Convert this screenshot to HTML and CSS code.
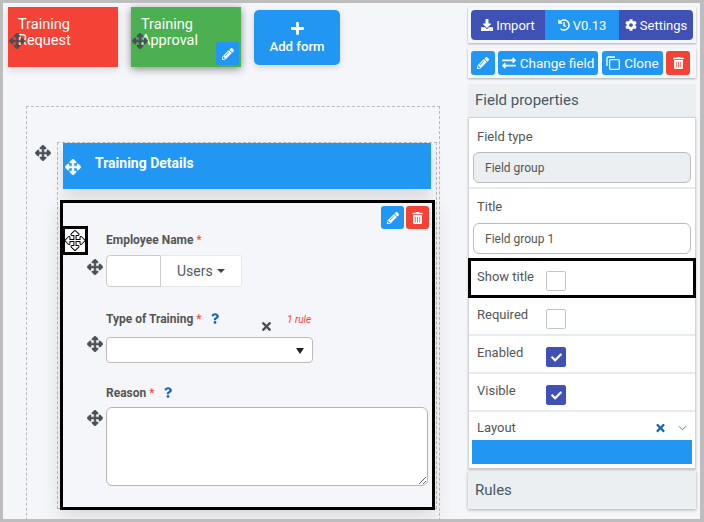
FILE: index.html
```html
<!DOCTYPE html>
<html lang="en">
<head>
    <meta charset="UTF-8">
    <meta name="viewport" content="width=device-width, initial-scale=1.0">
    <title>Form Builder</title>
    <link rel="stylesheet" href="styles.css">
</head>
<body>
    <svg class="sprite" xmlns="http://www.w3.org/2000/svg">
        <symbol id="i-move" viewBox="0 0 512 512"><path d="M352.201 425.775l-79.196 79.196c-9.373 9.373-24.568 9.373-33.941 0l-79.196-79.196c-15.119-15.119-4.411-40.971 16.971-40.97h51.162L228 284H127.196v51.162c0 21.382-25.851 32.09-40.971 16.971L7.029 272.937c-9.373-9.373-9.373-24.569 0-33.941L86.225 159.8c15.119-15.119 40.971-4.411 40.971 16.971V228H228V127.196h-51.23c-21.382 0-32.09-25.851-16.971-40.971l79.196-79.196c9.373-9.373 24.568-9.373 33.941 0l79.196 79.196c15.119 15.119 4.411 40.971-16.971 40.971h-51.162V228h100.804v-51.162c0-21.382 25.851-32.09 40.97-16.971l79.196 79.196c9.373 9.373 9.373 24.569 0 33.941L425.773 352.2c-15.119 15.119-40.971 4.411-40.97-16.971V284H284v100.804h51.23c21.382 0 32.09 25.851 16.971 40.971z"/></symbol>
        <symbol id="i-pencil" viewBox="0 0 512 512"><path d="M497.9 142.1l-46.1 46.1c-4.7 4.7-12.3 4.7-17 0l-111-111c-4.7-4.7-4.7-12.3 0-17l46.1-46.1c18.7-18.7 49.1-18.7 67.9 0l60.1 60.1c18.8 18.7 18.8 49.1 0 67.9zM284.2 99.8L21.6 362.4.4 483.9c-2.9 16.4 11.4 30.6 27.8 27.8l121.5-21.3 262.6-262.6c4.7-4.7 4.7-12.3 0-17l-111-111c-4.8-4.7-12.4-4.7-17.1 0zM124.1 339.9c-5.5-5.5-5.5-14.3 0-19.8l154-154c5.5-5.5 14.3-5.5 19.8 0s5.5 14.3 0 19.8l-154 154c-5.5 5.5-14.3 5.5-19.8 0zM88 424h48v36.3l-64.5 11.3-31.1-31.1L51.7 376H88v48z"/></symbol>
        <symbol id="i-trash" viewBox="0 0 448 512"><path d="M32 464a48 48 0 0 0 48 48h288a48 48 0 0 0 48-48V128H32zm272-256a16 16 0 0 1 32 0v224a16 16 0 0 1-32 0zm-96 0a16 16 0 0 1 32 0v224a16 16 0 0 1-32 0zm-96 0a16 16 0 0 1 32 0v224a16 16 0 0 1-32 0zM432 32H312l-9.4-18.7A24 24 0 0 0 281.1 0H166.8a23.72 23.72 0 0 0-21.4 13.3L136 32H16A16 16 0 0 0 0 48v32a16 16 0 0 0 16 16h416a16 16 0 0 0 16-16V48a16 16 0 0 0-16-16z"/></symbol>
        <symbol id="i-plus" viewBox="0 0 448 512"><path d="M416 208H272V64c0-17.67-14.33-32-32-32h-32c-17.67 0-32 14.33-32 32v144H32c-17.67 0-32 14.33-32 32v32c0 17.67 14.33 32 32 32h144v144c0 17.67 14.33 32 32 32h32c17.67 0 32-14.33 32-32V304h144c17.67 0 32-14.33 32-32v-32c0-17.67-14.33-32-32-32z"/></symbol>
        <symbol id="i-times" viewBox="0 0 352 512"><path d="M242.72 256l100.07-100.07c12.28-12.28 12.28-32.19 0-44.48l-22.24-22.24c-12.28-12.28-32.19-12.28-44.48 0L176 189.28 75.93 89.21c-12.28-12.28-32.19-12.28-44.48 0L9.21 111.45c-12.28 12.28-12.28 32.19 0 44.48L109.28 256 9.21 356.07c-12.28 12.28-12.28 32.19 0 44.48l22.24 22.24c12.28 12.28 32.2 12.28 44.48 0L176 322.72l100.07 100.07c12.28 12.28 32.2 12.28 44.48 0l22.24-22.24c12.28-12.28 12.28-32.19 0-44.48L242.72 256z"/></symbol>
        <symbol id="i-check" viewBox="0 0 512 512"><path d="M173.898 439.404l-166.4-166.4c-9.997-9.997-9.997-26.206 0-36.204l36.203-36.204c9.997-9.998 26.207-9.998 36.204 0L192 312.69 432.095 72.596c9.997-9.997 26.207-9.997 36.204 0l36.203 36.204c9.997 9.997 9.997 26.206 0 36.204l-294.4 294.401c-9.998 9.997-26.207 9.997-36.204-.001z"/></symbol>
        <symbol id="i-question" viewBox="0 0 384 512"><path d="M202.021 0C122.202 0 70.503 32.703 29.914 91.026c-7.363 10.58-5.093 25.086 5.178 32.874l43.138 32.709c10.373 7.865 25.132 6.026 33.253-4.148 25.049-31.381 43.63-49.449 82.757-49.449 30.764 0 68.816 19.799 68.816 49.631 0 22.552-18.617 34.134-48.993 51.164-35.423 19.86-82.299 44.576-82.299 106.405V320c0 13.255 10.745 24 24 24h72.471c13.255 0 24-10.745 24-24v-5.773c0-42.86 125.268-44.645 125.268-160.627C377.504 66.256 286.902 0 202.021 0zM192 373.459c-38.196 0-69.271 31.075-69.271 69.271 0 38.195 31.075 69.27 69.271 69.27s69.271-31.075 69.271-69.271-31.075-69.27-69.271-69.27z"/></symbol>
        <symbol id="i-download" viewBox="0 0 512 512"><path d="M216 0h80c13.3 0 24 10.7 24 24v168h87.7c17.8 0 26.7 21.5 14.1 34.1L269.7 378.3c-7.5 7.5-19.8 7.5-27.3 0L90.1 226.1c-12.6-12.6-3.7-34.1 14.1-34.1H192V24c0-13.3 10.7-24 24-24zm296 376v112c0 13.3-10.7 24-24 24H24c-13.3 0-24-10.7-24-24V376c0-13.3 10.7-24 24-24h146.7l49 49c20.1 20.1 52.5 20.1 72.6 0l49-49H488c13.3 0 24 10.7 24 24zm-124 88c0-11-9-20-20-20s-20 9-20 20 9 20 20 20 20-9 20-20zm64 0c0-11-9-20-20-20s-20 9-20 20 9 20 20 20 20-9 20-20z"/></symbol>
        <symbol id="i-history" viewBox="0 0 512 512"><path d="M504 255.531c.253 136.64-111.18 248.372-247.82 248.468-59.015.042-113.223-20.53-155.822-54.911-11.077-8.94-11.905-25.541-1.839-35.607l11.267-11.267c8.609-8.609 22.353-9.551 31.891-1.984C173.062 425.135 212.781 440 256 440c101.705 0 184-82.311 184-184 0-101.705-82.311-184-184-184-48.814 0-93.149 18.969-126.068 49.932l50.754 50.754c10.08 10.08 2.941 27.314-11.313 27.314H24c-8.837 0-16-7.163-16-16V38.627c0-14.254 17.234-21.393 27.314-11.314l49.372 49.372C129.209 34.136 189.552 8 256 8c136.81 0 247.747 110.78 248 247.531zm-180.912 78.784l9.823-12.63c8.138-10.463 6.253-25.542-4.21-33.679L288 256.349V152c0-13.255-10.745-24-24-24h-16c-13.255 0-24 10.745-24 24v135.651l65.409 50.874c10.463 8.137 25.541 6.253 33.679-4.21z"/></symbol>
        <symbol id="i-cog" viewBox="0 0 512 512"><path d="M487.4 315.7l-42.6-24.6c4.3-23.2 4.3-47 0-70.2l42.6-24.6c4.9-2.8 7.1-8.6 5.5-14-11.1-35.6-30-67.8-54.7-94.6-3.8-4.1-10-5.1-14.8-2.3L380.8 110c-17.9-15.4-38.5-27.3-60.8-35.1V25.8c0-5.6-3.9-10.5-9.4-11.7-36.7-8.2-74.3-7.8-109.2 0-5.5 1.2-9.4 6.1-9.4 11.7V75c-22.2 7.9-42.8 19.8-60.8 35.1L88.7 85.5c-4.9-2.8-11-1.9-14.8 2.3-24.7 26.7-43.6 58.9-54.7 94.6-1.7 5.4.6 11.2 5.5 14L67.3 221c-4.3 23.2-4.3 47 0 70.2l-42.6 24.6c-4.9 2.8-7.1 8.6-5.5 14 11.1 35.6 30 67.8 54.7 94.6 3.8 4.1 10 5.1 14.8 2.3l42.6-24.6c17.9 15.4 38.5 27.3 60.8 35.1v49.2c0 5.6 3.9 10.5 9.4 11.7 36.7 8.2 74.3 7.8 109.2 0 5.5-1.2 9.4-6.1 9.4-11.7v-49.2c22.2-7.9 42.8-19.8 60.8-35.1l42.6 24.6c4.9 2.8 11 1.9 14.8-2.3 24.7-26.7 43.6-58.9 54.7-94.6 1.5-5.5-.7-11.3-5.6-14.1zM256 336c-44.1 0-80-35.9-80-80s35.9-80 80-80 80 35.9 80 80-35.9 80-80 80z"/></symbol>
        <symbol id="i-exchange" viewBox="0 0 512 512"><path d="M0 168v-16c0-13.255 10.745-24 24-24h360V80c0-21.367 25.899-32.042 40.971-16.971l80 80c9.372 9.373 9.372 24.569 0 33.941l-80 80C409.956 271.982 384 261.456 384 240v-48H24c-13.255 0-24-10.745-24-24zm488 152H128v-48c0-21.314-25.862-32.08-40.971-16.971l-80 80c-9.372 9.373-9.372 24.569 0 33.941l80 80C102.057 464.028 128 453.542 128 432v-48h360c13.255 0 24-10.745 24-24v-16c0-13.255-10.745-24-24-24z"/></symbol>
        <symbol id="i-clone" viewBox="0 0 14 14"><path d="M1 10V2a1 1 0 0 1 1-1h7" fill="none" stroke="currentColor" stroke-width="1.3"/><rect x="3.6" y="3.6" width="9.7" height="9.7" rx="1" fill="none" stroke="currentColor" stroke-width="1.3"/></symbol>
        <symbol id="i-chevron" viewBox="0 0 10 6"><path d="M1 1l4 4 4-4" fill="none" stroke="currentColor" stroke-width="1"/></symbol>
    </svg>

    <div class="frame">
        <main class="builder">
            <div class="forms">
                <div class="tab tab-red">
                    Training Request
                    <svg class="move move-tab"><use href="#i-move"/></svg>
                </div>
                <div class="tab tab-green">
                    Training Approval
                    <svg class="move move-tab"><use href="#i-move"/></svg>
                    <span class="btn btn-blue tab-edit"><svg class="icon"><use href="#i-pencil"/></svg></span>
                </div>
                <div class="add-form">
                    <svg class="add-icon"><use href="#i-plus"/></svg>
                    Add form
                </div>
            </div>

            <div class="canvas">
                <div class="group">
                    <svg class="move move-group"><use href="#i-move"/></svg>
                    <div class="group-title">
                        <svg class="move move-title"><use href="#i-move"/></svg>
                        Training Details
                    </div>

                    <section class="selected">
                        <span class="cursor"><svg><use href="#i-move"/></svg></span>
                        <div class="selected-tools">
                            <span class="btn btn-blue"><svg class="icon"><use href="#i-pencil"/></svg></span>
                            <span class="btn btn-red"><svg class="icon icon-trash"><use href="#i-trash"/></svg></span>
                        </div>

                        <div class="field field-name">
                            <label class="field-label">Employee Name <span class="req">*</span></label>
                            <div class="control">
                                <svg class="move move-name"><use href="#i-move"/></svg>
                                <input class="name-input" type="text">
                                <span class="users">Users<i class="caret"></i></span>
                            </div>
                        </div>

                        <div class="field field-type">
                            <label class="field-label">Type of Training <span class="req">*</span><svg class="help"><use href="#i-question"/></svg></label>
                            <div class="control">
                                <svg class="move move-type"><use href="#i-move"/></svg>
                                <svg class="rule-x"><use href="#i-times"/></svg>
                                <span class="rule-count">1 rule</span>
                                <div class="select"><i class="select-arrow"></i></div>
                            </div>
                        </div>

                        <div class="field field-reason">
                            <label class="field-label">Reason <span class="req">*</span><svg class="help"><use href="#i-question"/></svg></label>
                            <div class="control">
                                <svg class="move move-reason"><use href="#i-move"/></svg>
                                <textarea class="reason"></textarea>
                            </div>
                        </div>
                    </section>
                </div>
            </div>
        </main>

        <aside class="side">
            <div class="toolbar">
                <div class="btn-group">
                    <span class="seg seg-indigo"><svg class="icon"><use href="#i-download"/></svg>Import</span>
                    <span class="seg seg-blue"><svg class="icon"><use href="#i-history"/></svg>V0.13</span>
                    <span class="seg seg-indigo"><svg class="icon"><use href="#i-cog"/></svg>Settings</span>
                </div>
            </div>
            <div class="toolbar toolbar-field">
                <span class="btn btn-blue"><svg class="icon"><use href="#i-pencil"/></svg></span>
                <span class="btn btn-blue btn-change"><svg class="icon icon-wide"><use href="#i-exchange"/></svg>Change field</span>
                <span class="btn btn-blue btn-clone"><svg class="icon icon-wide"><use href="#i-clone"/></svg>Clone</span>
                <span class="btn btn-red"><svg class="icon icon-trash"><use href="#i-trash"/></svg></span>
            </div>

            <div class="panel-head">Field properties</div>
            <div class="props">
                <div class="prop prop-text">
                    <label class="prop-label">Field type</label>
                    <input class="prop-input prop-input-off" type="text" value="Field group" readonly>
                </div>
                <div class="prop prop-text prop-title">
                    <label class="prop-label">Title</label>
                    <input class="prop-input" type="text" value="Field group 1">
                </div>
                <div class="prop-check prop-outlined">
                    <label class="prop-label">Show title</label>
                    <span class="check"></span>
                </div>
                <div class="prop-check">
                    <label class="prop-label">Required</label>
                    <span class="check"></span>
                </div>
                <div class="prop-check">
                    <label class="prop-label">Enabled</label>
                    <span class="check check-on"><svg><use href="#i-check"/></svg></span>
                </div>
                <div class="prop-check">
                    <label class="prop-label">Visible</label>
                    <span class="check check-on"><svg><use href="#i-check"/></svg></span>
                </div>
                <div class="prop-layout">
                    <div class="layout-head">
                        <label class="prop-label">Layout</label>
                        <svg class="layout-x"><use href="#i-times"/></svg>
                        <svg class="layout-chevron"><use href="#i-chevron"/></svg>
                    </div>
                    <div class="layout-bar"></div>
                </div>
            </div>
            <div class="panel-head panel-rules">Rules</div>
        </aside>
    </div>
</body>
</html>
```

FILE: styles.css
```css
* {
    box-sizing: border-box;
}
body {
    font-family: Roboto, "Liberation Sans", sans-serif;
    margin: 0;
    padding: 0;
    color: #455a64;
}
.sprite {
    display: none;
}
svg {
    fill: currentColor;
}
.frame {
    display: flex;
    width: 704px;
    height: 522px;
    overflow: hidden;
    background-color: #f5f6fa;
    border-style: solid;
    border-color: #bdbdbd;
    border-width: 3px 4px 3px 3px;
}

/* left side */
.builder {
    width: 465px;
    flex: none;
}
.forms {
    display: flex;
    align-items: flex-start;
    gap: 13px;
    padding: 4px 0 0 5px;
}
.tab {
    position: relative;
    width: 110px;
    height: 60px;
    padding: 10px 30px 0 10px;
    color: white;
    font-size: 14.5px;
    line-height: 16px;
}
.tab-red {
    background-color: #f44336;
    box-shadow: 0 3px 8px rgba(0, 0, 0, 0.12);
}
.tab-green {
    background-color: #4caf50;
    box-shadow: 0 2px 8px rgba(0, 0, 0, 0.45);
}
.tab-edit {
    position: absolute;
    right: 2px;
    bottom: 2px;
}
.add-form {
    display: flex;
    flex-direction: column;
    align-items: center;
    width: 86px;
    height: 55px;
    margin-top: 3px;
    padding-top: 11px;
    background-color: #2196f3;
    border-radius: 5px;
    box-shadow: 0 2px 6px rgba(0, 0, 0, 0.15);
    color: white;
    font-size: 13.2px;
    font-weight: 500;
    line-height: 16px;
}
.add-icon {
    width: 13px;
    height: 15px;
    margin-bottom: 3px;
}
.canvas {
    width: 414px;
    height: 450px;
    margin: 39px 0 0 23px;
    padding: 35px 2px 0 30px;
    border: 1px dashed #bbb;
}
.group {
    position: relative;
    height: 367px;
    border: 1px dashed #bbb;
}
.group-title {
    position: relative;
    height: 46px;
    margin: 0 5px;
    padding: 12px 0 0 32px;
    background-color: #2196f3;
    box-shadow: 0 6px 14px rgba(0, 0, 0, 0.12);
    color: white;
    font-size: 14px;
    font-weight: 700;
    line-height: 16px;
}
.move {
    position: absolute;
    width: 16px;
    height: 16px;
    color: #4a5056;
    stroke: currentColor;
    stroke-width: 18px;
}
.move-tab {
    left: 1px;
    top: 26px;
}
.move-group {
    left: -23px;
    top: 2px;
}
.move-title {
    left: 2px;
    top: 16px;
    color: white;
}
.selected {
    position: relative;
    height: 310px;
    margin: 11px 1px 0 2px;
    padding: 3px 3px 0 43px;
    background-color: #f5f6fa;
    border: 3px solid black;
    box-shadow: 0 6px 18px rgba(0, 0, 0, 0.12);
}
.cursor {
    position: absolute;
    left: -1px;
    top: 23px;
    width: 26px;
    height: 29px;
    background-color: white;
    border: 3px solid black;
}
.cursor svg {
    display: block;
    width: 20px;
    height: 23px;
    fill: white;
    stroke: black;
    stroke-width: 26px;
}
.selected-tools {
    display: flex;
    justify-content: flex-end;
    gap: 2px;
}
.field {
    font-size: 12px;
}
.field-label {
    display: block;
    height: 16px;
    color: #555;
    font-size: 12px;
    font-weight: 700;
    line-height: 16px;
}
.req {
    color: #f44336;
    font-weight: 400;
}
.help {
    width: 8px;
    height: 11px;
    margin: 0 0 -1px 10px;
    color: #1565c0;
}
.control {
    position: relative;
    display: flex;
}
.field-name {
    margin-top: 3px;
}
.field-name .field-label {
    margin-bottom: 7px;
}
.field-type {
    margin-top: 24px;
}
.field-type .field-label {
    margin-bottom: 10px;
}
.field-reason {
    margin-top: 22px;
}
.field-reason .field-label {
    margin-bottom: 6px;
}
.move-name {
    left: -19px;
    top: 4px;
}
.move-type {
    left: -19px;
    top: -1px;
}
.move-reason {
    left: -19px;
    top: 3px;
}
.name-input {
    width: 55px;
    height: 32px;
    padding: 0;
    background-color: white;
    border: 1px solid #ccc;
    border-radius: 4px 0 0 4px;
}
.users {
    display: flex;
    align-items: center;
    width: 81px;
    height: 32px;
    padding-left: 16px;
    background-color: white;
    border: 1px solid #e6e8ee;
    border-left: 0;
    border-radius: 0 3px 3px 0;
    color: #4f5b62;
    font-size: 14px;
}
.caret {
    width: 0;
    height: 0;
    margin-left: 4px;
    border-style: solid;
    border-width: 4px 4px 0;
    border-color: #444 transparent transparent;
}
.rule-x {
    position: absolute;
    left: 156px;
    top: -17px;
    width: 9px;
    height: 13px;
    color: #4a5056;
}
.rule-count {
    position: absolute;
    left: 181px;
    top: -23px;
    color: #f44336;
    font-size: 10px;
    font-style: italic;
    line-height: 12px;
}
.select {
    position: relative;
    width: 207px;
    height: 26px;
    background-color: white;
    border: 1px solid #bbb;
    border-radius: 4px;
}
.select-arrow {
    position: absolute;
    right: 8px;
    top: 10px;
    border-style: solid;
    border-width: 6px 4px 0;
    border-color: #222 transparent transparent;
}
.reason {
    display: block;
    width: 322px;
    height: 79px;
    background-color: white;
    border: 1px solid #b4b4b4;
    border-radius: 6px;
    outline: none;
}

/* buttons */
.btn {
    display: inline-flex;
    align-items: center;
    justify-content: center;
    width: 23px;
    height: 23px;
    border-radius: 3px;
    color: white;
    font-size: 13.5px;
}
.btn-blue {
    background-color: #2196f3;
}
.btn-red {
    background-color: #f44336;
}
.icon {
    width: 12px;
    height: 12px;
    flex: none;
}
.icon-trash {
    width: 11px;
}
.icon-wide {
    width: 14px;
    height: 14px;
    margin-right: 4px;
}

/* right side */
.side {
    width: 228px;
    flex: none;
    padding-top: 4px;
}
.toolbar {
    padding: 3px;
    box-shadow: 0 1px 2px rgba(0, 0, 0, 0.3);
}
.btn-group {
    display: flex;
    height: 30px;
    border-radius: 4px;
    overflow: hidden;
}
.seg {
    display: flex;
    flex: 1;
    align-items: center;
    justify-content: center;
    gap: 3px;
    color: white;
    font-size: 13px;
}
.seg-indigo {
    background-color: #3f51b5;
}
.seg-blue {
    background-color: #2196f3;
}
.toolbar-field {
    display: flex;
    height: 30px;
    margin-top: 5px;
    gap: 3px;
}
.toolbar-field .btn {
    height: 24px;
    width: 24px;
}
.toolbar-field .btn-change {
    width: 100px;
    margin-right: 1px;
}
.toolbar-field .btn-clone {
    width: 61px;
}
.panel-head {
    height: 34px;
    margin-top: 6px;
    padding: 7px 0 0 7px;
    background-color: #eceff1;
    border-bottom: 1px solid #dde2e5;
    font-size: 15px;
    line-height: 18px;
}
.props {
    margin: 0 1px;
    background-color: white;
    box-shadow: 0 1px 2px 1px rgba(0, 0, 0, 0.2);
}
.prop-label {
    display: block;
    height: 16px;
    color: #555;
    font-size: 13px;
    line-height: 16px;
}
.prop-text {
    height: 71px;
    padding: 11px 4px 0;
    border-bottom: 2px solid #e9ecef;
}
.prop-title {
    height: 69px;
    padding-top: 10px;
    border-bottom: 0;
}
.prop-text .prop-label {
    margin: 0 0 7px 4px;
}
.prop-title .prop-label {
    margin-bottom: 8px;
}
.prop-input {
    display: block;
    width: 218px;
    height: 31px;
    padding: 0 0 0 11px;
    border: 1px solid #bbb;
    border-radius: 6px;
    color: #555;
    font-family: Roboto, sans-serif;
    font-size: 12px;
}
.prop-input-off {
    background-color: #eceff1;
}
.prop-check {
    display: flex;
    align-items: flex-start;
    height: 38px;
    padding: 9px 0 0 8px;
    border-bottom: 2px solid #e9ecef;
}
.prop-check .prop-label {
    width: 69px;
}
.check {
    width: 20px;
    height: 20px;
    margin-top: 2px;
    border: 1px solid #c4c4c4;
    border-radius: 2px;
    background-color: white;
}
.check-on {
    display: flex;
    align-items: center;
    justify-content: center;
    background-color: #3f51b5;
    border-color: #3f51b5;
    color: white;
}
.check-on svg {
    width: 11px;
    height: 11px;
}
.prop-outlined {
    height: 40px;
    margin: 0 -1px;
    padding: 8px 0 0 6px;
    border: 3px solid black;
}
.prop-layout {
    height: 56px;
    padding: 8px 3px 0;
}
.layout-head {
    display: flex;
    align-items: center;
    height: 16px;
    padding-left: 5px;
}
.layout-head .prop-label {
    flex: 1;
}
.layout-x {
    width: 9px;
    height: 12px;
    color: #1565c0;
}
.layout-chevron {
    width: 9px;
    height: 6px;
    margin: 0 5px 0 13px;
    color: #2b6fc4;
}
.layout-bar {
    height: 24px;
    margin-top: 4px;
    background-color: #2196f3;
}
.panel-rules {
    height: 38px;
    margin-top: 3px;
    padding-top: 10px;
    border-bottom: 0;
    box-shadow: 0 1px 3px rgba(0, 0, 0, 0.3);
}
```
